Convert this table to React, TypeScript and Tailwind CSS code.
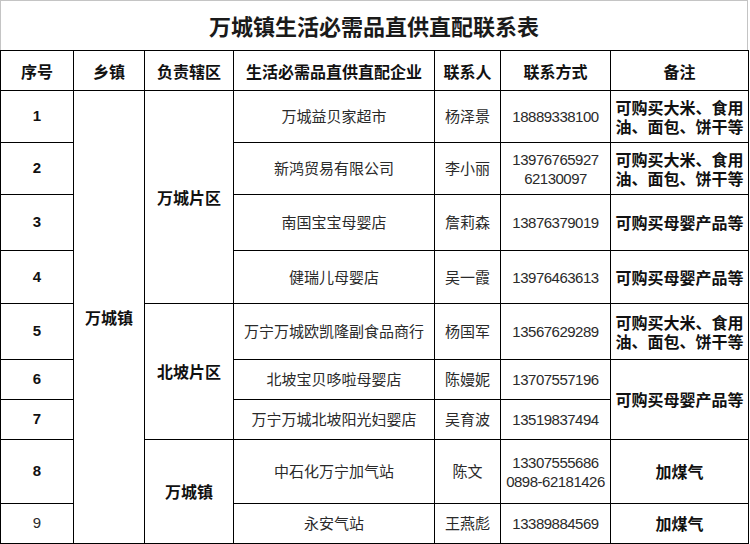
import React from "react";

const cjk = "font-['Noto_Sans_CJK_SC',sans-serif]";
const digits = "font-['Liberation_Sans','Noto_Sans_CJK_SC',sans-serif]";

const cell = "border border-black p-0 text-center align-middle";
const body = `${cell} ${cjk} text-[15px] font-normal text-[#2a2a2a]`;
const head = `${cell} ${cjk} text-[16px] font-bold text-[#111]`;
const bold = `${cell} ${cjk} text-[16px] font-bold text-[#111] leading-[19px]`;
const phone = `${cell} ${digits} text-[15px] tracking-[-0.5px] text-[#2a2a2a] leading-[19px]`;
const num = `${cell} ${digits} text-[15px] font-bold text-[#111]`;

const MILK = "可购买母婴产品等";
const FOOD = (
  <>
    可购买大米、食用
    <br />
    油、面包、饼干等
  </>
);

type Row = {
  n: string;
  h: string;
  shop: string;
  who: string;
  tel: React.ReactNode;
  note?: React.ReactNode;
  noteSpan?: number;
};

const rows: Row[] = [
  { n: "1", h: "h-[52px]", shop: "万城益贝家超市", who: "杨泽景", tel: "18889338100", note: FOOD },
  {
    n: "2",
    h: "h-[52px]",
    shop: "新鸿贸易有限公司",
    who: "李小丽",
    tel: (
      <>
        13976765927
        <br />
        62130097
      </>
    ),
    note: FOOD,
  },
  { n: "3", h: "h-[56px]", shop: "南国宝宝母婴店", who: "詹莉森", tel: "13876379019", note: MILK },
  { n: "4", h: "h-[53px]", shop: "健瑞儿母婴店", who: "吴一霞", tel: "13976463613", note: MILK },
  { n: "5", h: "h-[56px]", shop: "万宁万城欧凯隆副食品商行", who: "杨国军", tel: "13567629289", note: FOOD },
  { n: "6", h: "h-[40px]", shop: "北坡宝贝哆啦母婴店", who: "陈嫚妮", tel: "13707557196", note: MILK, noteSpan: 2 },
  { n: "7", h: "h-[40px]", shop: "万宁万城北坡阳光妇婴店", who: "吴育波", tel: "13519837494" },
  {
    n: "8",
    h: "h-[64px]",
    shop: "中石化万宁加气站",
    who: "陈文",
    tel: (
      <>
        13307555686
        <br />
        0898-62181426
      </>
    ),
    note: "加煤气",
  },
  { n: "9", h: "h-[40px]", shop: "永安气站", who: "王燕彪", tel: "13389884569", note: "加煤气" },
];

const areas: Record<number, { name: string; span: number }> = {
  0: { name: "万城片区", span: 4 },
  4: { name: "北坡片区", span: 3 },
  7: { name: "万城镇", span: 2 },
};

export default function App() {
  return (
    <div className="w-[750px] h-[544px] bg-white overflow-hidden">
      <div className="w-[748px]">
        <div
          className={`h-[50px] border-l border-t border-r border-[#c4c4c4] flex items-center justify-center ${cjk} text-[22px] font-bold text-[#1a1a1a]`}
        >
          万城镇生活必需品直供直配联系表
        </div>
        <table className="w-[748px] table-fixed border-collapse">
          <colgroup>
            <col className="w-[73px]" />
            <col className="w-[71px]" />
            <col className="w-[89px]" />
            <col className="w-[201px]" />
            <col className="w-[66px]" />
            <col className="w-[110px]" />
            <col className="w-[138px]" />
          </colgroup>
          <tbody>
            <tr className="h-[40px]">
              <td className={head}>序号</td>
              <td className={head}>乡镇</td>
              <td className={head}>负责辖区</td>
              <td className={head}>生活必需品直供直配企业</td>
              <td className={head}>联系人</td>
              <td className={head}>联系方式</td>
              <td className={head}>备注</td>
            </tr>
            {rows.map((r, i) => (
              <tr key={r.n} className={r.h}>
                <td className={r.n === "9" ? `${cell} ${digits} text-[15px] text-[#2a2a2a]` : num}>{r.n}</td>
                {i === 0 && (
                  <td rowSpan={9} className={bold}>
                    万城镇
                  </td>
                )}
                {areas[i] && (
                  <td rowSpan={areas[i].span} className={bold}>
                    {areas[i].name}
                  </td>
                )}
                <td className={body}>{r.shop}</td>
                <td className={body}>{r.who}</td>
                <td className={phone}>{r.tel}</td>
                {r.note !== undefined && (
                  <td rowSpan={r.noteSpan ?? 1} className={`${bold} px-[4px]`}>
                    {r.note}
                  </td>
                )}
              </tr>
            ))}
          </tbody>
        </table>
      </div>
    </div>
  );
}
